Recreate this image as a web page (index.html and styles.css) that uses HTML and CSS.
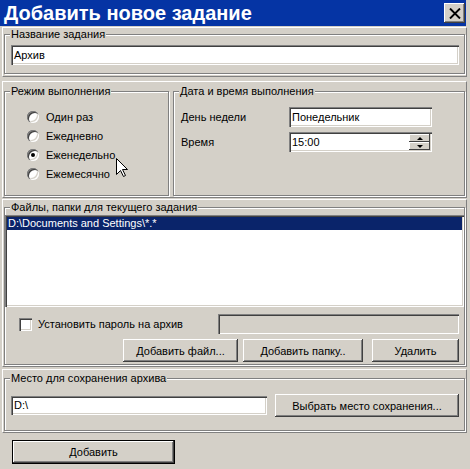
FILE: index.html
```html
<!DOCTYPE html>
<html lang="ru">
<head>
<meta charset="utf-8">
<title>Добавить новое задание</title>
<link rel="stylesheet" href="styles.css">
</head>
<body>
<div class="window">
  <div class="titlebar">
    <span class="title">Добавить новое задание</span>
    <div class="close">
      <svg width="12" height="11" viewBox="0 0 12 11"><path d="M1 0.5 L11 10.5 M11 0.5 L1 10.5" stroke="#000" stroke-width="1.9" fill="none"/></svg>
    </div>
  </div>

  <div class="panel p1">
    <fieldset class="group">
      <legend>Название задания</legend>
      <div class="body b-name">
        <div class="field">Архив</div>
      </div>
    </fieldset>
  </div>

  <div class="panel p2">
    <fieldset class="group g-mode">
      <legend>Режим выполнения</legend>
      <div class="body b-mode">
        <div class="radio-row"><span class="radio"></span><span>Один раз</span></div>
        <div class="radio-row"><span class="radio"></span><span>Ежедневно</span></div>
        <div class="radio-row"><span class="radio checked"></span><span>Еженедельно</span></div>
        <div class="radio-row"><span class="radio"></span><span>Ежемесячно</span></div>
      </div>
    </fieldset>
    <fieldset class="group g-date">
      <legend>Дата и время выполнения</legend>
      <div class="body b-date">
        <div class="form-row"><span class="lbl">День недели</span><div class="field f-day">Понедельник</div></div>
        <div class="form-row r2"><span class="lbl">Время</span>
          <div class="field f-day f-spin"><span class="val">15:00</span>
            <span class="spin"><span class="sb"><span class="tri up"></span></span><span class="sb"><span class="tri down"></span></span></span>
          </div>
        </div>
      </div>
    </fieldset>
  </div>

  <div class="panel p3">
    <fieldset class="group">
      <legend>Файлы, папки для текущего задания</legend>
      <div class="body b-files">
        <div class="listbox"><div class="sel">D:\Documents and Settings\*.*</div></div>
        <div class="check-row">
          <span class="checkbox"></span><span class="check-lbl">Установить пароль на архив</span>
          <div class="field f-pass"></div>
        </div>
        <div class="btn-row">
          <div class="btn b-file">Добавить файл...</div>
          <div class="btn b-folder">Добавить папку..</div>
          <div class="btn b-del">Удалить</div>
        </div>
      </div>
    </fieldset>
  </div>

  <div class="panel p4">
    <fieldset class="group">
      <legend>Место для сохранения архива</legend>
      <div class="body b-save">
        <div class="field f-path">D:\</div>
        <div class="btn b-choose">Выбрать место сохранения...</div>
      </div>
    </fieldset>
  </div>

  <div class="btn btn-default">Добавить</div>

  <svg class="cursor" width="13" height="20" viewBox="0 0 13 20"><path d="M0.5 0.5 L0.5 16.5 L4.5 12.5 L7.5 18.5 L9.5 17.5 L6.5 11.5 L11.5 11.5 Z" fill="#fff" stroke="#000" stroke-width="1"/></svg>
</div>
</body>
</html>
```
FILE: styles.css
```css
html, body {
  margin: 0;
  padding: 0;
}
body {
  background: #d4d0c8;
  font-family: "Liberation Sans", Arial, sans-serif;
  font-size: 11px;
  color: #000;
}
.window {
  position: relative;
  width: 470px;
  height: 469px;
  overflow: hidden;
}
.titlebar {
  width: 466px;
  height: 26px;
  box-sizing: border-box;
  background: #0534a4;
  display: flex;
  align-items: center;
  justify-content: space-between;
  padding: 0 1px 0 4px;
}
.title {
  color: #fff;
  font-family: "Liberation Sans", Arial, sans-serif;
  font-weight: bold;
  font-size: 20px;
  line-height: 26px;
}
.close {
  width: 21px;
  height: 20px;
  background: #d4d0c8;
  box-shadow: inset -1px -1px #404040, inset 1px 1px #fff, inset -2px -2px #808080;
  display: flex;
  align-items: center;
  justify-content: center;
}
.panel {
  margin-left: 2px;
  width: 465px;
  box-sizing: border-box;
  border: 1px solid;
  border-color: #fff #808080 #808080 #fff;
  padding: 0 1px;
}
.p1 { margin-top: 1px; padding-bottom: 2px; }
.p2 { margin-top: 4px; padding-top: 3px; padding-bottom: 1px; display: flex; gap: 4px; }
.p3 { margin-top: 1px; padding-top: 1px; padding-bottom: 1px; }
.p4 { margin-top: 2px; padding-top: 2px; padding-bottom: 1px; }

.group {
  margin: 0;
  padding: 0;
  min-width: 0;
  border: 1px solid #808080;
  box-shadow: inset 1px 1px #fff, 1px 1px #fff;
}
.group legend {
  margin-left: 5px;
  padding: 0 1px;
  line-height: 13px;
  font-size: 11px;
  background: #d4d0c8;
}
.field {
  height: 20px;
  box-sizing: border-box;
  background: #fff;
  box-shadow: inset 1px 1px #808080, inset 2px 2px #404040, inset -1px -1px #fff, inset -2px -2px #d4d0c8;
  padding-left: 3px;
  line-height: 20px;
  white-space: nowrap;
}
.b-name { padding: 4px 5px 8px 6px; }

.g-mode { width: 165px; box-sizing: border-box; flex: none; }
.g-date { flex: 1; }
.b-mode { padding: 9px 0 12px 22px; }
.radio-row { display: flex; align-items: center; height: 19px; }
.radio {
  position: relative;
  width: 12px;
  height: 12px;
  margin-right: 7px;
  border-radius: 50%;
  background: #fff;
  box-shadow: inset 1px 1px #808080, inset 2px 2px #404040, inset -1px -1px #fff, inset -2px -2px #d4d0c8;
}
.radio.checked::after {
  content: "";
  position: absolute;
  left: 4px;
  top: 4px;
  width: 4px;
  height: 4px;
  border-radius: 50%;
  background: #000;
}
.b-date { padding: 9px 0 0 7px; }
.form-row { display: flex; align-items: center; height: 20px; }
.form-row.r2 { margin-top: 5px; }
.lbl { width: 108px; flex: none; }
.f-day { width: 143px; }
.f-spin { display: flex; padding-right: 2px; }
.val { flex: 1; }
.spin { display: flex; flex-direction: column; width: 21px; padding: 2px 0; }
.sb {
  height: 8px;
  background: #d4d0c8;
  box-shadow: inset -1px -1px #404040, inset 1px 1px #fff;
  display: flex;
  align-items: center;
  justify-content: center;
}
.tri { width: 0; height: 0; border-left: 3px solid transparent; border-right: 3px solid transparent; }
.tri.up { border-bottom: 3px solid #000; }
.tri.down { border-top: 3px solid #000; }

.b-files { padding: 1px 0 2px 0; }
.listbox {
  height: 92px;
  box-sizing: border-box;
  background: #fff;
  padding: 2px;
  box-shadow: inset 1px 1px #808080, inset 2px 2px #404040, inset -1px -1px #fff, inset -2px -2px #d4d0c8;
}
.sel {
  height: 13px;
  line-height: 13px;
  background: #0a246a;
  color: #fff;
  padding-left: 1px;
}
.check-row { display: flex; align-items: center; height: 20px; margin-top: 7px; }
.checkbox {
  width: 13px;
  height: 13px;
  margin-left: 14px;
  box-sizing: border-box;
  background: #fff;
  box-shadow: inset 1px 1px #808080, inset 2px 2px #404040, inset -1px -1px #fff, inset -2px -2px #d4d0c8;
}
.check-lbl { margin-left: 6px; }
.f-pass { margin-left: auto; margin-right: 5px; width: 241px; background: #d4d0c8; }
.btn-row { display: flex; justify-content: flex-end; margin-top: 5px; padding-right: 5px; }
.btn {
  height: 23px;
  box-sizing: border-box;
  background: #d4d0c8;
  box-shadow: inset -1px -1px #404040, inset 1px 1px #fff, inset -2px -2px #808080;
  display: flex;
  align-items: center;
  justify-content: center;
  white-space: nowrap;
}
.b-file { width: 115px; margin-right: 5px; }
.b-folder { width: 120px; margin-right: 9px; }
.b-del { width: 87px; }

.b-save { display: flex; align-items: center; padding: 9px 5px 13px 6px; }
.f-path { width: 256px; height: 19px; line-height: 19px; }
.b-choose { width: 184px; margin-left: 8px; }

.btn-default {
  width: 163px;
  height: 24px;
  margin: 7px 0 0 12px;
  border: 1px solid #000;
}
.cursor {
  position: absolute;
  left: 116px;
  top: 158px;
}
```
